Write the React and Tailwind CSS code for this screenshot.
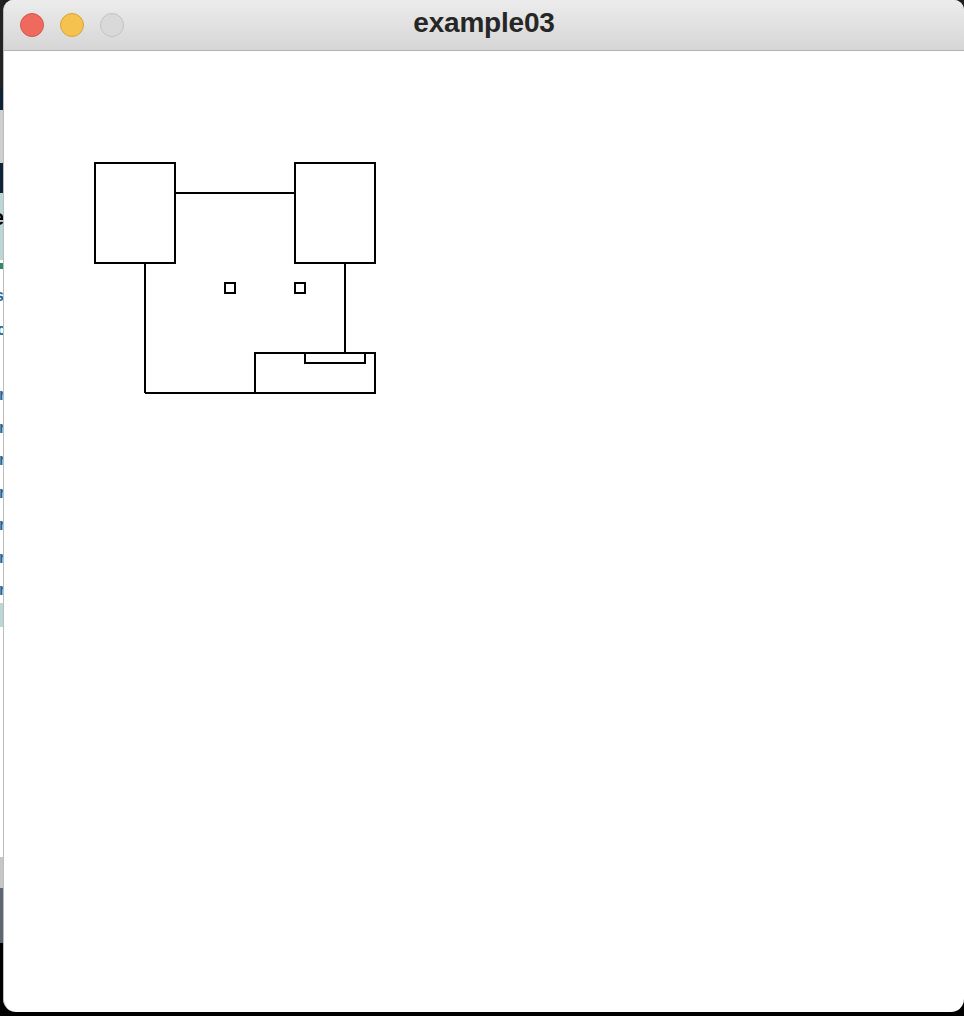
import React from "react";

// what peeks out from behind the window on the left edge
const Backdrop = () => {
  const rLines = [0, 1, 2, 3, 4, 5, 6];
  return (
    <div className="flex w-[3px] shrink-0 flex-col overflow-hidden">
      <div className="h-[88px] bg-[#232323]" />
      <div className="h-[22px] bg-[#0e2436]" />
      <div className="h-[53px] bg-[#cfcfcf]" />
      <div className="h-[30px] bg-[#0e2436]" />
      <div className="relative h-[67px] bg-[#bcd6d4]">
        <span className="absolute left-[-8px] top-[14px] text-[22px] font-bold leading-none text-black">e</span>
      </div>
      <div className="relative h-[343px] bg-white text-[16px] font-bold leading-none text-[#1b6a9c]">
        <div className="absolute left-0 top-[3px] h-[6px] w-[3px] bg-[#2f8a6a]" />
        <span className="absolute left-[-5px] top-[28px]">s</span>
        <span className="absolute left-[-3px] top-[62px]">c</span>
        {rLines.map((i) => (
          <span key={i} className="absolute left-[-1px]" style={{ top: 127 + i * 32.5 }}>
            r
          </span>
        ))}
      </div>
      <div className="h-[24px] bg-[#bcd6d4]" />
      <div className="h-[230px] bg-white" />
      <div className="h-[31px] bg-[#c6c6c6]" />
      <div className="h-[55px] bg-[#5d6670]" />
      <div className="flex-1 bg-black" />
    </div>
  );
};

const Light = ({ fill, ring }) => (
  <span className={`h-[24px] w-[24px] rounded-full border ${fill} ${ring}`} />
);

const TitleBar = () => (
  <div className="relative flex h-[51px] shrink-0 items-center border-b border-[#b3b3b3] bg-[linear-gradient(180deg,#ececec_0%,#d6d6d6_100%)]">
    <div className="flex gap-[16px] pl-[16px] pb-[1px]">
      <Light fill="bg-[#ee6a5f]" ring="border-[#d4564c]" />
      <Light fill="bg-[#f5c14f]" ring="border-[#d9a43d]" />
      <Light fill="bg-[#d9d9d9]" ring="border-[#c2c2c2]" />
    </div>
    <h1 className="absolute inset-x-0 top-[8px] text-center text-[28px] font-bold leading-[30px] tracking-[-0.2px] text-[#262626]">
      example03
    </h1>
  </div>
);

const Sketch = () => (
  <svg
    width="400"
    height="400"
    viewBox="0 0 200 200"
    fill="none"
    stroke="#000"
    strokeWidth="1"
    shapeRendering="crispEdges"
    className="ml-[1px] mt-[2px] block"
  >
    <rect x="45" y="55" width="40" height="50" />
    <rect x="145" y="55" width="40" height="50" />
    <line x1="85" y1="70" x2="145" y2="70" />
    <line x1="70" y1="105" x2="70" y2="170" />
    <line x1="170" y1="105" x2="170" y2="150" />
    <line x1="70" y1="170" x2="125" y2="170" />
    <rect x="125" y="150" width="60" height="20" />
    <rect x="150" y="150" width="30" height="5" />
    <rect x="110" y="115" width="5" height="5" />
    <rect x="145" y="115" width="5" height="5" />
  </svg>
);

export default function App() {
  return (
    <div className="flex h-[1016px] w-[964px] overflow-hidden bg-[linear-gradient(180deg,#1f1f1f_0%,#1f1f1f_60%,#000_60%)] font-['Liberation_Sans',Arial,sans-serif]">
      <Backdrop />
      <div className="flex h-[1012px] flex-1 flex-col overflow-hidden rounded-t-[10px] rounded-b-[13px] border-l border-[#bdbdbd] bg-white">
        <TitleBar />
        <main className="flex-1">
          <Sketch />
        </main>
      </div>
    </div>
  );
}
